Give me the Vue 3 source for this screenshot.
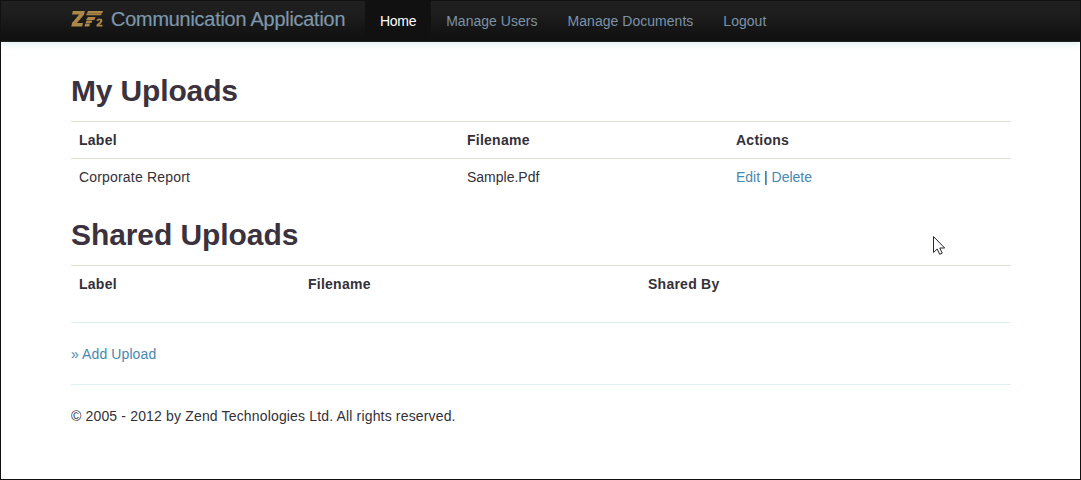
<script setup>
const nav = [
  { label: 'Home', active: true },
  { label: 'Manage Users' },
  { label: 'Manage Documents' },
  { label: 'Logout' },
]
</script>

<template>
  <div class="page">
    <header class="navbar">
      <a class="brand">
        <svg class="logo" width="32" height="16" viewBox="0 0 32 16" fill="#ad8747">
          <path d="M1.8 0H13.8L13 3.7L6 12H12L11.2 15.5H.3L1 12L8.2 3.6H1Z" />
          <path d="M17 0H32L31.4 1.9H16.2ZM15.8 2.3H31L29.8 4.2H15.2ZM17 6H24.5L23.4 9H15Z" />
          <path d="M15.6 9.4H21.5L20.4 12H14.6ZM14.4 12.4H19L18.2 15.5H13.4Z" />
          <path d="M25.6 10V9.1Q26 7.5 28.5 7.5Q31.4 7.5 31.4 9.8Q31.4 11.1 29.8 12.4L28.3 13.7H31.5V15.5H25.5V13.7L28.3 11.3Q29.4 10.4 29.3 9.8Q29.2 9.1 28.4 9.1Q27.6 9.1 27.4 10Z" />
        </svg>
        <span>Communication Application</span>
      </a>
      <nav class="nav">
        <a v-for="item in nav" :key="item.label" :class="{ active: item.active }">{{ item.label }}</a>
      </nav>
    </header>
    <main class="container">
      <h1>My Uploads</h1>
      <table class="uploads">
        <thead>
          <tr><th>Label</th><th>Filename</th><th>Actions</th></tr>
        </thead>
        <tbody>
          <tr>
            <td class="label">Corporate Report</td>
            <td>Sample.Pdf</td>
            <td><a>Edit</a> | <a>Delete</a></td>
          </tr>
        </tbody>
      </table>
      <h1 class="second">Shared Uploads</h1>
      <table class="shared">
        <thead>
          <tr><th>Label</th><th>Filename</th><th>Shared By</th></tr>
        </thead>
      </table>
      <p class="add"><a>» Add Upload</a></p>
      <footer>© 2005 - 2012 by Zend Technologies Ltd. All rights reserved.</footer>
    </main>
    <svg class="cursor" width="13" height="21" viewBox="0 0 13 21">
      <path d="M.5 .5V16.5L4.2 13L6.7 18.3L9.2 17.2L6.8 12H11.7Z" fill="#fff" stroke="#2b2630" />
    </svg>
  </div>
</template>

<style>
body {
  background: #fff;
}
</style>

<style scoped>
.page {
  position: relative;
  box-sizing: border-box;
  width: 1081px;
  height: 480px;
  border: 1px solid #111;
  background: #fff;
  color: #333038;
  font: 14px/20px "Liberation Sans", Arial, sans-serif;
  overflow: hidden;
}
.navbar {
  display: flex;
  box-sizing: border-box;
  height: 41px;
  padding-left: 70px;
  background: linear-gradient(#202020, #1d1d1d 35%, #111 90%);
  border-bottom: 1px solid #202624;
  box-shadow: 0 1px 8px rgba(60, 150, 170, 0.2);
}
.brand {
  display: flex;
  width: 294px;
  color: #7898b4;
  font-size: 20px;
  line-height: 37px;
  letter-spacing: -0.28px;
  white-space: nowrap;
  text-shadow: -1px 0 rgba(165, 120, 55, 0.25);
}
.logo {
  margin: 10px 8px 0 0;
}
.nav {
  display: flex;
}
.nav a {
  padding: 0 15px;
  color: #7c93a8;
  line-height: 40px;
  letter-spacing: 0.03px;
}
.nav .active {
  background: #111;
  color: #fff;
  letter-spacing: -0.3px;
}
.container {
  width: 940px;
  margin-left: 70px;
}
h1 {
  margin: 0;
  padding-top: 29px;
  height: 50px;
  font-size: 30px;
  line-height: 40px;
  letter-spacing: -0.15px;
  color: #3b323e;
}
.second {
  padding-top: 20px;
  letter-spacing: -0.08px;
}
table {
  width: 100%;
  table-layout: fixed;
  border-collapse: collapse;
}
th,
td {
  height: 20px;
  padding: 8px;
  border-top: 1px solid #e5decf;
  text-align: left;
}
th {
  letter-spacing: 0.25px;
}
.label {
  letter-spacing: 0.18px;
}
.uploads th:nth-child(1) {
  width: 372px;
}
.uploads th:nth-child(2) {
  width: 253px;
}
.shared th:nth-child(1) {
  width: 213px;
}
.shared th:nth-child(2) {
  width: 324px;
}
a {
  color: #4788b0;
}
.add {
  margin: 20px 0 0;
  padding: 21px 0 20px;
  border-top: 1px solid #e1f0f2;
  border-bottom: 1px solid #e1f0f2;
  letter-spacing: 0.1px;
}
footer {
  padding-top: 21px;
  letter-spacing: 0.16px;
}
.cursor {
  position: absolute;
  left: 932px;
  top: 235px;
}
</style>
